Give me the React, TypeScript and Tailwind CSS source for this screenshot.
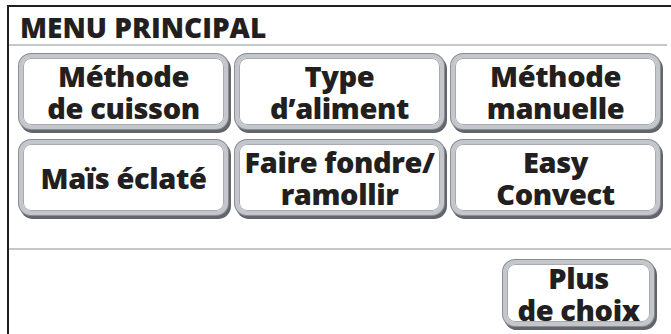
const font = { fontFamily: '"Open Sans", "Noto Sans", sans-serif' };

function Key({ lines, className = "" }: { lines: string[]; className?: string }) {
  return (
    <button
      className={
        "flex flex-col items-center justify-center rounded-[12px] border-[4px] border-[#c3c7cc] bg-white text-[29px] font-extrabold leading-[32px] tracking-[-0.4px] text-[#231f20] shadow-[0_0_0_1px_#898d92,2px_3px_0_1px_#62666b,inset_0_0_0_1px_#a7abb0] " +
        className
      }
    >
      {lines.map((l) => (
        <span key={l} className="whitespace-nowrap">
          {l}
        </span>
      ))}
    </button>
  );
}

export default function App() {
  const keys = [
    ["Méthode", "de cuisson"],
    ["Type", "d’aliment"],
    ["Méthode", "manuelle"],
    ["Maïs éclaté"],
    ["Faire fondre/", "ramollir"],
    ["Easy", "Convect"],
  ];

  return (
    <div className="h-[334px] w-[671px] overflow-hidden bg-white pl-[7px] pt-[5px]" style={font}>
      <div className="flex h-[329px] flex-col border-l-[2px] border-t-[2px] border-[#231f20]">
        <div className="flex h-[37px] items-end pl-[11px]">
          <h1 className="text-[28px] font-extrabold leading-[34px] tracking-[0px] text-[#231f20]">MENU PRINCIPAL</h1>
        </div>
        <div className="mr-[4px] h-[2px] bg-[#c4c8cc]" />
        <div className="grid grid-cols-3 gap-x-[7px] gap-y-[11px] pl-[10px] pr-[11px] pt-[8px]">
          {keys.map((k, i) => (
            <Key key={i} lines={k} className="h-[75px]" />
          ))}
        </div>
        <div className="mt-[33px] h-[2px] bg-[#c4c8cc]" />
        <div className="flex justify-end pr-[17px] pt-[10px]">
          <Key lines={["Plus", "de choix"]} className="h-[66px] w-[151px] pt-[2px]" />
        </div>
      </div>
    </div>
  );
}
